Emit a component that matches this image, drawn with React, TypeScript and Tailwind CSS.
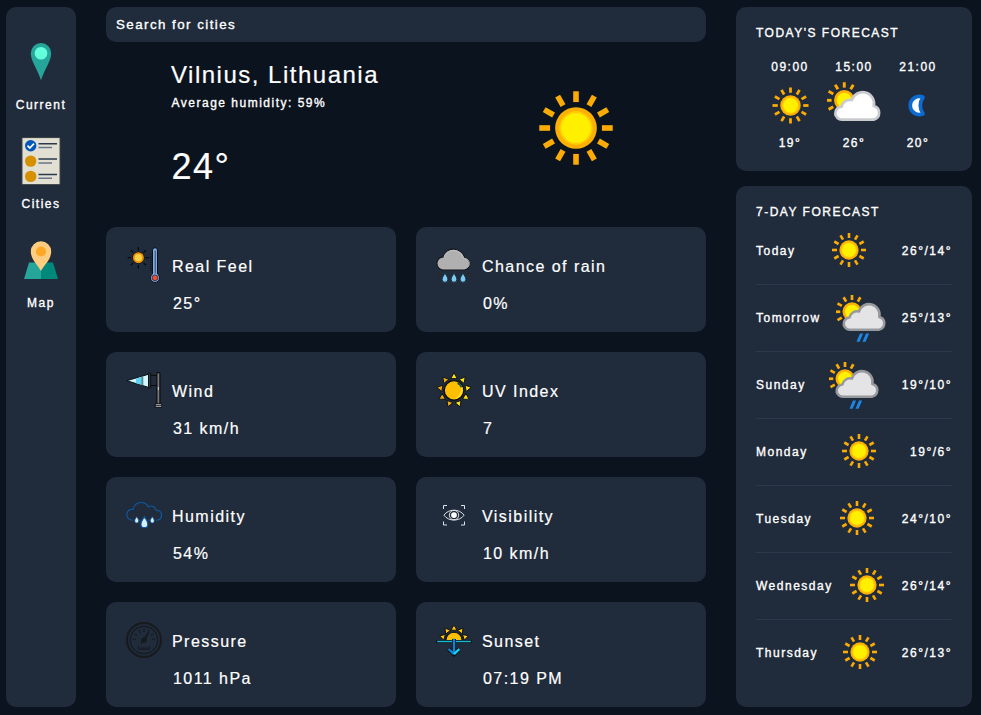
import type { ReactNode } from "react";

const RAYS = [0, 30, 60, 90, 120, 150, 180, 210, 240, 270, 300, 330];

function Sunny({ className }: { className: string }) {
  return (
    <svg viewBox="0 0 100 100" className={className}>
      {RAYS.map((a) => (
        <rect key={a} x="47.4" y="16" width="5.2" height="10" fill="#fbab05" transform={`rotate(${a} 50 50)`} />
      ))}
      <circle cx="50" cy="50" r="19.300" fill="#fdb004" />
      <circle cx="50" cy="50" r="15.400" fill="#ffcf00" />
      <circle cx="50" cy="50" r="13.600" fill="#fff000" />
    </svg>
  );
}

function SunCloud({ className, rain }: { className: string; rain?: boolean }) {
  return (
    <svg viewBox="0 0 100 100" className={className}>
      {[210, 240, 270, 300, 330, 0, 30].map((a) => (
        <rect key={a} x="29.300" y="6" width="5.400" height="10" fill="#fbab05" transform={`rotate(${a} 32 39.5)`} />
      ))}
      <circle cx="32" cy="39.500" r="19" fill="#fdb004" />
      <circle cx="32" cy="39.500" r="14" fill="#fef102" />
      <path
        d="M28 75.3 A12 12 0 0 1 27 51.2 A15.500 15.500 0 0 1 46 39 A21 21 0 0 1 86.500 50 A13 13 0 0 1 86.500 75.3 Z"
        fill={rain ? "#e4e4e7" : "#ffffff"}
        stroke={rain ? "#97999c" : "#c9cbce"}
        strokeWidth="5"
        strokeLinejoin="round"
      />
      {rain && (
        <g fill="#1e87e5">
          <path d="M48 83h6.200l-7 16.500H41z" />
          <path d="M60 83h6.200l-7 16.500H53z" />
        </g>
      )}
    </svg>
  );
}

function Moon({ className }: { className: string }) {
  return (
    <svg viewBox="0 0 100 100" className={className}>
      <path
        d="M58.500 34.500 A17 17 0 1 0 58.500 65.500 A26 26 0 0 1 58.500 34.500 Z"
        fill="#fff"
        stroke="#0b6bd3"
        strokeWidth="7"
        strokeLinejoin="round"
      />
    </svg>
  );
}

function PinIcon() {
  return (
    <svg viewBox="0 0 48 48" className="size-12 shrink-0">
      <path d="M24 42.300C20.500 31 13.800 23 13.800 15.200a10.200 10.200 0 0 1 20.400 0C34.200 23 27.500 31 24 42.300Z" fill="#26a69a" />
      <circle cx="24" cy="15.300" r="6.300" fill="#64ffda" />
    </svg>
  );
}

function ListIcon() {
  return (
    <svg viewBox="0 0 48 48" className="size-12 shrink-0">
      <rect x="4.600" y=".3" width="38.800" height="47.600" rx="1" fill="#474b4a" />
      <rect x="5.500" y="1.100" width="37" height="45.900" fill="#e1e0d2" />
      <circle cx="13.700" cy="8.700" r="5.700" fill="#0057b8" />
      <path d="m10.500 8.700 2.300 2.400 4.200-4.400" fill="none" stroke="#fff" strokeWidth="1.700" />
      <circle cx="13.700" cy="24.100" r="5.700" fill="#d69100" />
      <circle cx="13.700" cy="39.400" r="5.700" fill="#d69100" />
      <path d="M21.500 6.800H40M21.500 22.100H40M21.500 37.400H40" stroke="#29384b" strokeWidth="1.500" />
      <path d="M21.500 10.500H35M21.500 25.900H35M21.500 41.200H35" stroke="#69748a" strokeWidth="1.500" />
    </svg>
  );
}

function MapIcon() {
  return (
    <svg viewBox="0 0 48 48" className="size-12 shrink-0">
      <path d="M24 26.500H12L7 43h17Z" fill="#26a69a" />
      <path d="M24 26.500h12L41 43H24Z" fill="#00897b" />
      <path d="M24 35c-2.500-5.500-10.200-11-10.200-19.500a10.200 10.200 0 0 1 20.400 0C34.200 24 26.500 29.500 24 35Z" fill="#ffcc80" />
      <circle cx="24" cy="15.500" r="5" fill="#ffa726" />
    </svg>
  );
}

function RealFeelIcon() {
  return (
    <svg viewBox="0 0 36 36" className="size-9">
      {[0, 45, 90, 135, 180, 225, 270, 315].map((a) => (
        <path key={a} d="M12.400 0v3.400" stroke="#07090d" strokeWidth="1.200" transform={`rotate(${a} 12.4 10.7)`} />
      ))}
      <circle cx="12.400" cy="10.700" r="6.200" fill="#17130c" />
      <circle cx="12.400" cy="10.700" r="4.600" fill="#f9cf45" stroke="#ea8f0c" strokeWidth="1.800" />
      <path d="M26.500 27V3.200a2.500 2.500 0 0 1 5 0V27a4.600 4.600 0 1 1-5 0Z" fill="#7cabe4" stroke="#0b0f15" strokeWidth="1" />
      <path d="M29.300 3.500v23" stroke="#46658c" strokeWidth="1.400" />
      <path d="M24.800 7v18" stroke="#0b0f15" strokeDasharray="1 1" strokeWidth="1" />
      <circle cx="29" cy="30.800" r="2.900" fill="#f04a3b" stroke="#27313e" strokeWidth=".8" />
    </svg>
  );
}

function Drop({ x, y, s, fill, stroke }: { x: number; y: number; s: number; fill: string; stroke: string }) {
  return (
    <path
      d="M0 -5C1 -3 3 -1 3 1.500A3 3 0 0 1 -3 1.500C-3 -1 -1 -3 0 -5Z"
      transform={`translate(${x} ${y}) scale(${s})`}
      fill={fill}
      stroke={stroke}
      strokeWidth="1"
    />
  );
}

function RainIcon() {
  return (
    <svg viewBox="0 0 36 36" className="size-9">
      <path
        d="M7.500 23A6.500 6.500 0 0 1 7.300 10C8 5.500 12.500 2.100 17.500 2.100S27.500 6 28.600 10.500A6.400 6.400 0 0 1 28.500 23Z"
        fill="#b0b0b0"
        stroke="#15171a"
        strokeWidth="1.100"
      />
      <path d="M8 10.300C9 6 13 3.400 17.500 3.400S26 6.500 27.600 11.200c5.800 0 7.500 6.300 4 9.200" fill="none" stroke="#c8c8c8" strokeWidth=".8" />
      <Drop x={9} y={31} s={0.95} fill="#7ecbf4" stroke="#173040" />
      <Drop x={18} y={31} s={0.95} fill="#7ecbf4" stroke="#173040" />
      <Drop x={27} y={31} s={0.95} fill="#7ecbf4" stroke="#173040" />
      <circle cx="2.700" cy="27.400" r="1" fill="#7b571b" stroke="#11151b" strokeWidth=".8" />
      <circle cx="33.300" cy="27.400" r="1" fill="#7b571b" stroke="#11151b" strokeWidth=".8" />
    </svg>
  );
}

function WindIcon() {
  return (
    <svg viewBox="0 0 36 36" className="size-9">
      <path d="M24 3.400h7M24 13.500h7" stroke="#090b0e" strokeWidth="1" />
      <path d="M.7 8.700 22.700 2.200v13.200Z" fill="#d3f7fc" stroke="#0b1118" strokeWidth="1" />
      <path d="M10 6.400 15.500 4.800v8L10 11.200Z" fill="#5bd5f5" />
      <path d="M15.300 4.900l2-.6v9.200l-2-.6Z" fill="#5f8791" />
      <rect x="22.700" y="1" width="2" height="15" rx=".8" fill="#3e4347" stroke="#0a0c0f" strokeWidth=".9" />
      <rect x="30.900" y=".6" width="3" height="31.500" rx=".8" fill="#76787b" stroke="#090a0c" strokeWidth="1.100" />
      <path d="M32.400 15v3" stroke="#d0d0d0" strokeWidth="1" />
      <path d="M29.500 31.600h6l.5 3.800h-7Z" fill="#a8aaac" stroke="#090a0c" strokeWidth=".9" />
      <path d="M29.500 33.500h6" stroke="#090a0c" strokeWidth=".7" />
    </svg>
  );
}

function UvIcon() {
  return (
    <svg viewBox="0 0 36 36" className="size-9">
      {[0, 40, 80, 120, 160, 200, 240, 280, 320].map((a) => (
        <path
          key={a}
          d="M18 .9 21.200 6.600H14.800Z"
          fill={a <= 160 ? "#ffe414" : "#e6ab13"}
          stroke="#0f1115"
          strokeWidth=".9"
          strokeLinejoin="round"
          transform={`rotate(${a} 18 18.400)`}
        />
      ))}
      <circle cx="18" cy="18.400" r="9.800" fill="#ffbf00" stroke="#0d0f12" strokeWidth="1.400" />
      <path d="M24.500 12.500a8.600 8.600 0 0 1-6 14.200c5-2 8-7.500 6-14.200Z" fill="#ffe11a" />
      <path d="M21.500 11.200c2 .6 3.300 1.900 4 4" fill="none" stroke="#12504d" strokeWidth="1.900" />
    </svg>
  );
}

function HumidityIcon() {
  return (
    <svg viewBox="0 0 36 36" className="size-9">
      <path
        d="M6.800 23.200C3 23.200.8 21 .8 17.600s2.700-5.800 6.500-5.300C7.500 8.200 11 5.500 15 5.500c3.500 0 6 1.500 7.200 4.200 3.200-1.600 7.300.1 7.700 3.600 3.300 0 5.600 2 5.600 5s-2.300 5-5.600 5M12.800 23.200h1.800M22 23.200h1.800"
        fill="none"
        stroke="#0d5ba6"
        strokeWidth="1.100"
      />
      <Drop x={10.700} y={23} s={0.65} fill="#d9edf8" stroke="#0d5ba6" />
      <Drop x={18.400} y={25.400} s={1.150} fill="#d9edf8" stroke="#0d5ba6" />
      <Drop x={26.300} y={23} s={0.65} fill="#d9edf8" stroke="#0d5ba6" />
    </svg>
  );
}

function EyeIcon() {
  return (
    <svg viewBox="0 0 36 36" className="size-9" fill="none" stroke="#dfe2e6" strokeWidth="1">
      <path d="M7.500 12V8.500H11M25 8.500h3.500V12M28.500 24.500V28H25M11 28H7.500v-3.500" />
      <path d="M7.900 18.200C12.500 11.500 23.500 11.500 28.100 18.200C23.500 24.700 12.500 24.700 7.900 18.200Z" />
      <circle cx="18" cy="18.100" r="4.700" />
      <circle cx="18" cy="18.100" r="2.900" fill="#fff" stroke="none" />
    </svg>
  );
}

function GaugeIcon() {
  return (
    <svg viewBox="0 0 36 36" className="size-9" fill="none" stroke="#171a1f">
      <circle cx="18" cy="18" r="17" strokeWidth="2" />
      <circle cx="18" cy="18" r="13.700" strokeWidth="1.200" />
      {[-85, -57, -28, 0, 28, 57, 85].map((a) => (
        <path key={a} d="M18 6.800v3.200" strokeWidth="1.100" transform={`rotate(${a} 18 18)`} />
      ))}
      <path d="M15 21.500 17 17l5.500-6.500L19.500 18Z" fill="#171a1f" strokeWidth="1" />
      <circle cx="18" cy="18.300" r="2.300" fill="#171a1f" />
      <path d="M12 27.200h12M12.500 24v3M15.300 25v2M18 25v2M20.700 25v2M23.500 24v3" strokeWidth="1.100" />
    </svg>
  );
}

function SunsetIcon() {
  return (
    <svg viewBox="0 0 36 36" className="size-9">
      {[-74, -37, 0, 37, 74].map((a) => (
        <path
          key={a}
          d="M18 3 21 8.200H15Z"
          fill="#ffc60c"
          stroke="#0d0f12"
          strokeWidth=".9"
          strokeLinejoin="round"
          transform={`rotate(${a} 18 18)`}
        />
      ))}
      <path d="M9.800 18.500a8.200 8.200 0 0 1 16.400 0Z" fill="#ffc107" stroke="#0d0f12" strokeWidth="1.100" />
      <path d="M1.500 19.500h33" stroke="#0b0f14" strokeWidth="3.200" strokeLinecap="round" />
      <path d="M1.200 19.500h33.600" stroke="#19b9d3" strokeWidth="1.500" />
      <path d="M18 17v15M12.600 27l5.400 5.200 5.400-5.200" fill="none" stroke="#0b0f14" strokeWidth="4" />
      <path d="M18 16.800v15M12.600 27l5.400 5.200" fill="none" stroke="#0c85d6" strokeWidth="2.400" />
      <path d="m18 32.200 5.400-5.200" stroke="#16d3fa" strokeWidth="2.400" />
    </svg>
  );
}

const NAV: { label: string; icon: ReactNode }[] = [
  { label: "Current", icon: <PinIcon /> },
  { label: "Cities", icon: <ListIcon /> },
  { label: "Map", icon: <MapIcon /> },
];

const CARDS: { label: string; value: string; icon: ReactNode }[] = [
  { label: "Real Feel", value: "25°", icon: <RealFeelIcon /> },
  { label: "Chance of rain", value: "0%", icon: <RainIcon /> },
  { label: "Wind", value: "31 km/h", icon: <WindIcon /> },
  { label: "UV Index", value: "7", icon: <UvIcon /> },
  { label: "Humidity", value: "54%", icon: <HumidityIcon /> },
  { label: "Visibility", value: "10 km/h", icon: <EyeIcon /> },
  { label: "Pressure", value: "1011 hPa", icon: <GaugeIcon /> },
  { label: "Sunset", value: "07:19 PM", icon: <SunsetIcon /> },
];

const HOURS: { time: string; temp: string; icon: ReactNode }[] = [
  { time: "09:00", temp: "19°", icon: <Sunny className="size-[53px]" /> },
  { time: "15:00", temp: "26°", icon: <SunCloud className="size-[54px]" /> },
  { time: "21:00", temp: "20°", icon: <Moon className="size-[53px]" /> },
];

const DAYS = [
  { day: "Today", temp: "26°/14°", rain: false },
  { day: "Tomorrow", temp: "25°/13°", rain: true },
  { day: "Sunday", temp: "19°/10°", rain: true },
  { day: "Monday", temp: "19°/6°", rain: false },
  { day: "Tuesday", temp: "24°/10°", rain: false },
  { day: "Wednesday", temp: "26°/14°", rain: false },
  { day: "Thursday", temp: "26°/13°", rain: false },
];

export default function App() {
  return (
    <div className="flex h-[715px] w-[981px] gap-[30px] overflow-hidden bg-[#0b131e] px-1.5 pt-[7px] pb-2 font-['Liberation_Sans',Arial,sans-serif] text-xs tracking-[1.5px] text-white [-webkit-text-stroke:0.35px_white]">
      <nav className="flex w-[70px] shrink-0 flex-col items-center gap-[23px] rounded-[10px] bg-[#202b3b] pt-[31px]">
        {NAV.map((n) => (
          <div key={n.label} className="flex h-[76px] flex-col items-center gap-2.5">
            {n.icon}
            <span className="leading-[18px]">{n.label}</span>
          </div>
        ))}
      </nav>

      <main className="flex w-[600px] shrink-0 flex-col">
        <input
          className="h-[35px] w-full rounded-[10px] bg-[#202b3b] px-2.5 text-[13.333px] tracking-[1.45px] placeholder:text-white placeholder:opacity-100"
          placeholder="Search for cities"
        />
        <header className="flex h-[185px] justify-between pr-[76px] pl-[65px]">
          <div className="flex flex-col pt-[19px]">
            <h1 className="text-2xl leading-7 [-webkit-text-stroke:0.2px_white]">Vilnius, Lithuania</h1>
            <p className="pl-[0.5px] leading-7">Average humidity: 59%</p>
            <p className="mt-[29px] pl-[0.5px] text-4xl leading-[42px] [-webkit-text-stroke:0.2px_white]">24°</p>
          </div>
          <Sunny className="mt-[32px] size-[108px]" />
        </header>
        <section className="grid grid-cols-2 gap-5">
          {CARDS.map((c) => (
            <article
              key={c.label}
              className="h-[105px] rounded-[10px] bg-[#202b3b] px-5 pt-5 text-base tracking-[1.45px] [-webkit-text-stroke:0.2px_white]"
            >
              <div className="flex h-9 gap-2.5 leading-10">
                {c.icon}
                <h2>{c.label}</h2>
              </div>
              <p className="mt-2.5 pl-[47px] leading-[22px]">{c.value}</p>
            </article>
          ))}
        </section>
      </main>

      <aside className="flex w-[236px] shrink-0 flex-col gap-[15px]">
        <section className="h-[164px] rounded-[10px] bg-[#202b3b] px-5 pt-[18px]">
          <h2 className="leading-4">TODAY'S FORECAST</h2>
          <div className="mt-[18px] flex justify-center">
            {HOURS.map((h) => (
              <div key={h.time} className="flex w-16 flex-col items-center">
                <span className="leading-4">{h.time}</span>
                <span className="mt-1 h-[53px]">{h.icon}</span>
                <span className="mt-[3px] leading-4">{h.temp}</span>
              </div>
            ))}
          </div>
        </section>
        <section className="h-[521px] rounded-[10px] bg-[#202b3b] px-5 pt-[18px]">
          <h2 className="h-[14px] leading-4">7-DAY FORECAST</h2>
          <ul>
            {DAYS.map((d) => (
              <li
                key={d.day}
                className="flex h-[67px] items-center justify-between border-b border-[#2b394a] pb-px last:border-transparent"
              >
                <span>{d.day}</span>
                {d.rain ? <SunCloud rain className="mb-px size-[50px]" /> : <Sunny className="mb-px size-[50px]" />}
                <span>{d.temp}</span>
              </li>
            ))}
          </ul>
        </section>
      </aside>
    </div>
  );
}
